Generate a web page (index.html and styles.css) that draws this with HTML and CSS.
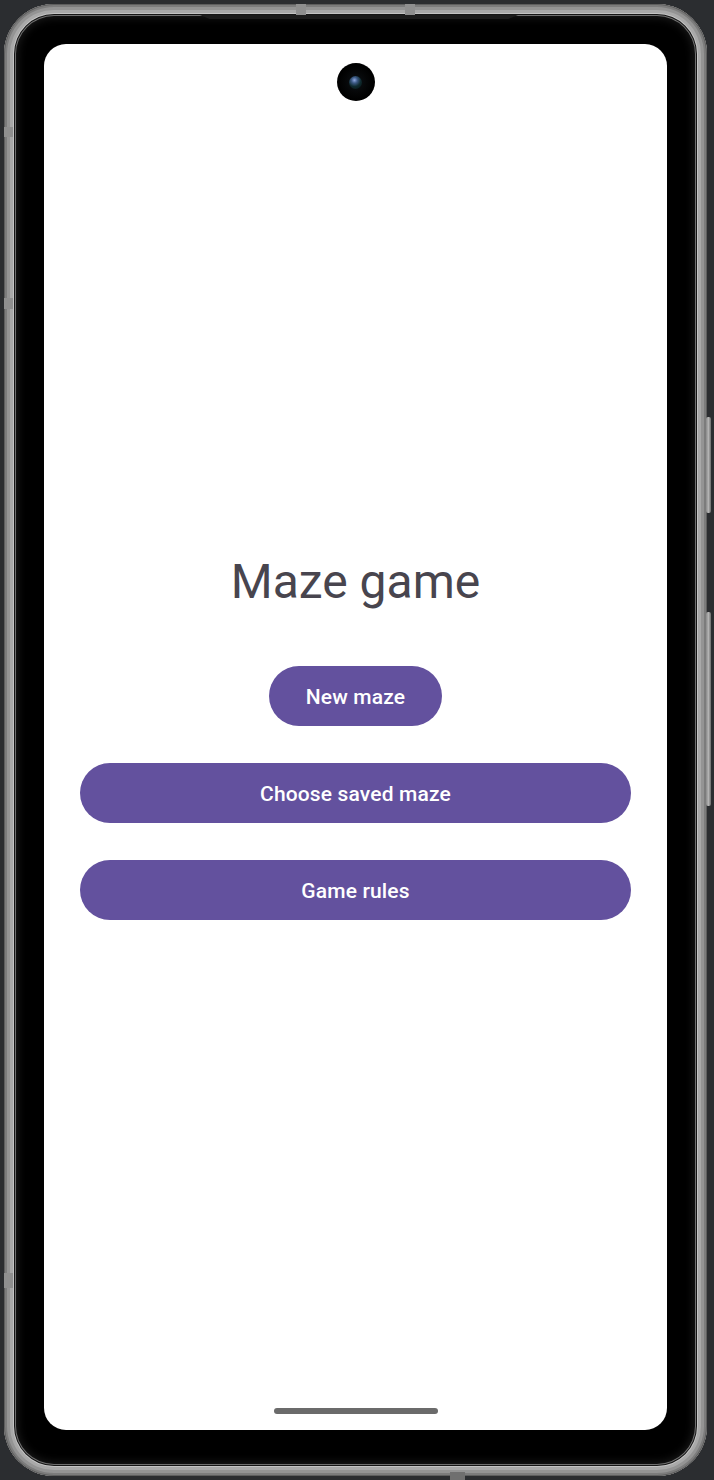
FILE: index.html
```html
<!DOCTYPE html>
<html lang="en">
<head>
<meta charset="utf-8">
<title>Maze game</title>
<link rel="stylesheet" href="styles.css">
</head>
<body>
<div class="device">
  <span class="lip"></span>
  <span class="key key-top1"></span>
  <span class="key key-top2"></span>
  <span class="key key-left1"></span>
  <span class="key key-left2"></span>
  <span class="key key-left3"></span>
  <span class="key key-bottom"></span>
  <span class="side side-power"></span>
  <span class="side side-volume"></span>
  <div class="screen">
    <span class="camera"><span class="lens"></span></span>
    <main class="content">
      <h1 class="title">Maze game</h1>
      <div class="actions">
        <button class="btn btn-compact">New maze</button>
        <button class="btn btn-wide">Choose saved maze</button>
        <button class="btn btn-wide">Game rules</button>
      </div>
    </main>
    <span class="homebar"></span>
  </div>
</div>
</body>
</html>
```

FILE: styles.css
```css
html, body {
  margin: 0;
  padding: 0;
}

body {
  background: #2b2d30;
  width: 714px;
  height: 1480px;
  overflow: hidden;
  font-family: Roboto, "Noto Sans", sans-serif;
}

.device {
  position: relative;
  box-sizing: border-box;
  width: 703px;
  height: 1472px;
  margin: 4px 0 0 4px;
  padding: 40px 40px 46px 40px;
  border-radius: 50px;
  background: #000;
  box-shadow:
    inset 0 0 0 1px #5e5e5e,
    inset 0 0 0 3px #7c7c7c,
    inset 0 0 0 6px #949494,
    inset 0 0 0 9px #a9a9a9,
    inset 0 0 0 10px #c4c4c4,
    inset 0 0 0 11px #161616,
    inset 0 0 0 12px #6f6f6f,
    inset 0 0 10px 13px #1e1e1e;
}

.lip {
  position: absolute;
  top: 11px;
  left: 196px;
  width: 318px;
  height: 4px;
  background: #1c1c1c;
  clip-path: polygon(0 0, 100% 0, 97% 100%, 3% 100%);
}

.key {
  position: absolute;
  background: #8f8f8f;
}

.key-top1 { top: 0; left: 292px; width: 10px; height: 11px; }
.key-top2 { top: 0; left: 401px; width: 10px; height: 11px; }
.key-left1 { left: 0; top: 123px; width: 9px; height: 10px; }
.key-left2 { left: 0; top: 294px; width: 9px; height: 11px; }
.key-left3 { left: 0; top: 1269px; width: 9px; height: 15px; }
.key-bottom { bottom: -4px; left: 446px; width: 15px; height: 8px; background: #6f6f6f; }

.side {
  position: absolute;
  right: -4px;
  width: 5px;
  border-radius: 2px;
  background: linear-gradient(90deg, #8a8a8a, #b3b3b3 50%, #6a6a6a);
}

.side-power { top: 413px; height: 96px; }
.side-volume { top: 608px; height: 194px; }

.screen {
  position: relative;
  box-sizing: border-box;
  height: 100%;
  padding: 0 36px;
  border-radius: 22px;
  background: #ffffff;
  display: flex;
  flex-direction: column;
  justify-content: center;
}

.camera {
  position: absolute;
  top: 19px;
  left: 50%;
  width: 38px;
  height: 38px;
  margin-left: -19px;
  border-radius: 50%;
  background: radial-gradient(circle at 50% 50%, #0d1216 0, #050607 40%, #000 65%);
  display: flex;
  align-items: center;
  justify-content: center;
}

.lens {
  width: 13px;
  height: 13px;
  border-radius: 50%;
  background: radial-gradient(circle at 42% 32%, #8fa8e0 0, #3d5a86 25%, #0f2a2e 55%, #061012 100%);
}

.content {
  display: flex;
  flex-direction: column;
  align-items: center;
}

.title {
  margin: 0;
  font-size: 48px;
  line-height: 56px;
  font-weight: 400;
  color: #48454e;
  letter-spacing: 0;
}

.actions {
  align-self: stretch;
  margin-top: 56px;
  display: flex;
  flex-direction: column;
  align-items: center;
  gap: 37px;
}

.btn {
  box-sizing: border-box;
  height: 60px;
  border: 0;
  border-radius: 30px;
  background: #63519e;
  color: #ffffff;
  font-family: Roboto, "Noto Sans", sans-serif;
  font-size: 21px;
  font-weight: 500;
  letter-spacing: 0.15px;
  line-height: 57px;
  padding: 3px 37px 0;
  cursor: pointer;
}

.btn-wide {
  align-self: stretch;
}

.homebar {
  position: absolute;
  left: 50%;
  bottom: 16px;
  width: 164px;
  height: 6px;
  margin-left: -82px;
  border-radius: 3px;
  background: #6b6b6b;
}
```
